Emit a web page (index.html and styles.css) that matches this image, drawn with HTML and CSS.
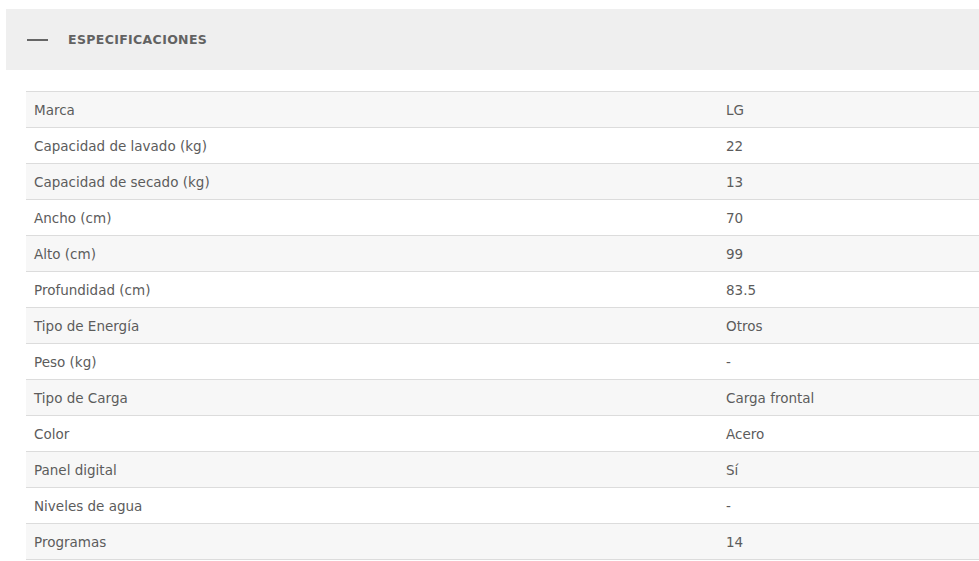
FILE: index.html
```html
<!DOCTYPE html>
<html lang="es">
<head>
<meta charset="utf-8">
<link rel="stylesheet" href="styles.css">
</head>
<body>
<section class="specs">
  <div class="specs-header">
    <span class="dash"></span>
    <h2 class="specs-title">ESPECIFICACIONES</h2>
  </div>
  <table class="specs-table">
    <tr><td>Marca</td><td>LG</td></tr>
    <tr><td>Capacidad de lavado (kg)</td><td>22</td></tr>
    <tr><td>Capacidad de secado (kg)</td><td>13</td></tr>
    <tr><td>Ancho (cm)</td><td>70</td></tr>
    <tr><td>Alto (cm)</td><td>99</td></tr>
    <tr><td>Profundidad (cm)</td><td>83.5</td></tr>
    <tr><td>Tipo de Energía</td><td>Otros</td></tr>
    <tr><td>Peso (kg)</td><td>-</td></tr>
    <tr><td>Tipo de Carga</td><td>Carga frontal</td></tr>
    <tr><td>Color</td><td>Acero</td></tr>
    <tr><td>Panel digital</td><td>Sí</td></tr>
    <tr><td>Niveles de agua</td><td>-</td></tr>
    <tr><td>Programas</td><td>14</td></tr>
  </table>
</section>
</body>
</html>
```
FILE: styles.css
```css
html, body {
  margin: 0;
  padding: 0;
  background: #fff;
}
body {
  font-family: "DejaVu Sans", "Open Sans", sans-serif;
  color: #5c5c5c;
  overflow: hidden;
}
.specs {
  padding: 9px 0 0 6px;
}
.specs-header {
  background: #efefef;
  height: 61px;
  display: flex;
  align-items: center;
  padding-left: 21px;
}
.dash {
  width: 21px;
  height: 2px;
  background: #666;
  margin-right: 20px;
}
.specs-title {
  margin: 0;
  font-size: 12.5px;
  font-weight: bold;
  color: #626262;
  letter-spacing: 0.35px;
}
.specs-table {
  margin: 21px 0 0 20px;
  width: calc(100% - 20px);
  border-collapse: collapse;
  font-size: 13.5px;
}
.specs-table td {
  height: 34px;
  padding: 1px 0 0 8px;
  border-top: 1px solid #dcdcdc;
  border-bottom: 1px solid #dcdcdc;
  vertical-align: middle;
}
.specs-table td:first-child {
  width: 684px;
}
.specs-table tr:nth-child(odd) {
  background: #f7f7f7;
}
```
